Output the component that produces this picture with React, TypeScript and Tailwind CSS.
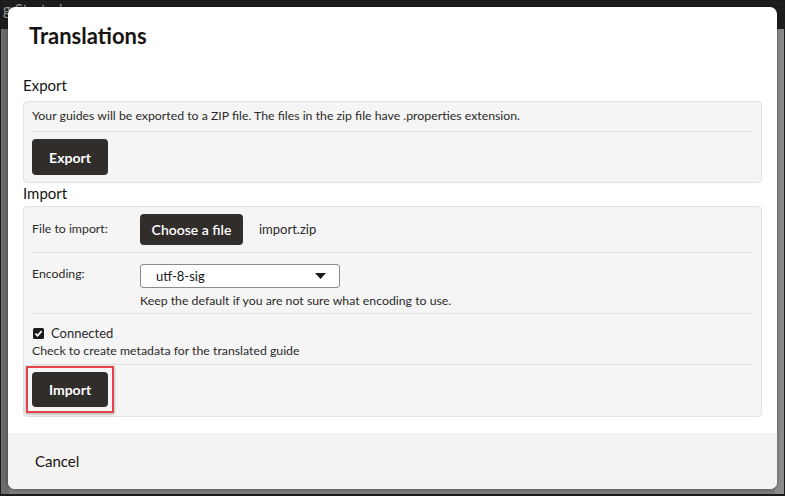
import React from 'react'

const font = { fontFamily: 'Lato, "Noto Sans", sans-serif' }

function CheckBox() {
  return (
    <svg width="11" height="11" viewBox="0 0 11 11" className="shrink-0">
      <rect x="0" y="0" width="11" height="11" rx="1.5" fill="#1d1b19" />
      <path d="M2.4 5.6 L4.5 7.7 L8.7 3.2" fill="none" stroke="#fff" strokeWidth="1.7" />
    </svg>
  )
}

function Caret() {
  return (
    <svg width="11" height="6" viewBox="0 0 11 6">
      <path d="M0 0 H11 L5.5 6 Z" fill="#1d1b19" />
    </svg>
  )
}

function DarkButton({ children, className = '' }: { children: React.ReactNode; className?: string }) {
  return (
    <button
      type="button"
      className={`rounded-[4px] bg-[#312d2a] text-white text-[14px] font-bold flex items-center justify-center ${className}`}
    >
      {children}
    </button>
  )
}

export default function App() {
  return (
    <div
      className="relative w-[785px] h-[496px] overflow-hidden bg-[#7d7d7d] border border-[#1a1a1a] border-b-2"
      style={font}
    >
      {/* page behind the overlay */}
      <div className="h-[28px] bg-[#1e1e1e] text-[#9a9a9a] text-[15px] leading-[16px] pl-[2px]">
        g Started ...
      </div>
      <div className="flex h-full">
        <div className="w-[8px] bg-[#6a6a6a]" />
        <div className="flex-1" />
        <div className="w-[9px] bg-[#8c8c8c]" />
      </div>

      {/* dialog */}
      <div className="absolute left-[7px] top-[6px] w-[769px] h-[482px] rounded-[7px] bg-white flex flex-col overflow-hidden shadow-[0_0_4px_rgba(0,0,0,0.4)]">
        <div className="flex-1 px-[15px]">
          <h1 className="pl-[6px] pt-[15px] text-[22px] font-bold text-[#161513] leading-[28px]">Translations</h1>

          <div className="mt-[26px] text-[15px] text-[#161513] leading-[18px]">Export</div>
          <div className="mt-[7px] rounded-[4px] border border-[#e2e2e2] bg-[#f5f5f5] px-[8px]">
            <div className="h-[30px] flex items-center border-b border-[#e0e0e0] text-[12.3px] text-[#2b2a28]">
              Your guides will be exported to a ZIP file. The files in the zip file have .properties extension.
            </div>
            <div className="py-[7px]">
              <DarkButton className="w-[76px] h-[36px]">Export</DarkButton>
            </div>
          </div>

          <div className="text-[15px] text-[#161513] leading-[18px] mt-[1px]">Import</div>
          <div className="mt-[4px] rounded-[4px] border border-[#e2e2e2] bg-[#f5f5f5] px-[8px] pb-[3px]">
            <div className="h-[46px] flex items-center border-b border-[#e0e0e0] text-[12.3px] text-[#2b2a28]">
              <div className="w-[108px]">File to import:</div>
              <DarkButton className="w-[103px] h-[31px] font-semibold">Choose a file</DarkButton>
              <div className="ml-[16px] text-[13px]">import.zip</div>
            </div>
            <div className="flex border-b border-[#e0e0e0] text-[12.3px] text-[#2b2a28] pt-[11px] h-[61px]">
              <div className="w-[108px] pt-[1px]">Encoding:</div>
              <div>
                <div className="w-[200px] h-[24px] rounded-[3px] border border-[#8b8a88] bg-white flex items-center justify-between pl-[15px] pr-[13px] text-[13px] text-[#161513]">
                  <span className="mt-[2px]">utf-8-sig</span>
                  <Caret />
                </div>
                <div className="mt-[4px]">Keep the default if you are not sure what encoding to use.</div>
              </div>
            </div>
            <div className="border-b border-[#e0e0e0] text-[12.3px] text-[#2b2a28] h-[51px] pt-[12px]">
              <div className="flex items-center gap-[7px] pl-[1px] leading-[14px]">
                <CheckBox />
                <span className="text-[13px]">Connected</span>
              </div>
              <div className="mt-[4px] leading-[14px]">Check to create metadata for the translated guide</div>
            </div>
            <div className="pt-[1px]">
              <div className="-ml-[6px] inline-block border-2 border-[#e5434c] p-[4px] shadow-[0_1px_3px_rgba(0,0,0,0.35)]">
                <DarkButton className="w-[76px] h-[35px]">Import</DarkButton>
              </div>
            </div>
          </div>
        </div>
        <div className="h-[56px] bg-[#f4f3f1] flex items-center pl-[27px] text-[15px] text-[#161513]">Cancel</div>
      </div>
    </div>
  )
}
